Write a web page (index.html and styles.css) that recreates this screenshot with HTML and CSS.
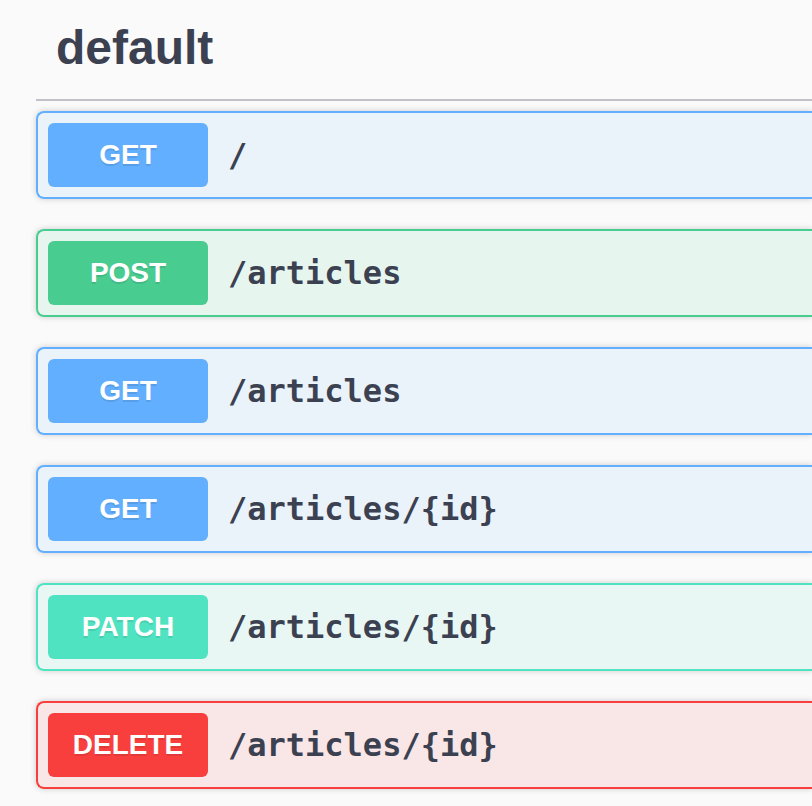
FILE: index.html
```html
<!DOCTYPE html>
<html lang="en">
<head>
<meta charset="utf-8">
<title>default</title>
<link rel="stylesheet" href="styles.css">
</head>
<body>
<div class="section">
  <h3 class="tag">default</h3>
  <div class="ops">
    <div class="op op-get"><span class="method">GET</span><span class="path">/</span></div>
    <div class="op op-post"><span class="method">POST</span><span class="path">/articles</span></div>
    <div class="op op-get"><span class="method">GET</span><span class="path">/articles</span></div>
    <div class="op op-get"><span class="method">GET</span><span class="path">/articles/{id}</span></div>
    <div class="op op-patch"><span class="method">PATCH</span><span class="path">/articles/{id}</span></div>
    <div class="op op-delete"><span class="method">DELETE</span><span class="path">/articles/{id}</span></div>
  </div>
</div>
</body>
</html>
```
FILE: styles.css
```css
html, body {
  margin: 0;
  padding: 0;
  background: #fafafa;
  overflow: hidden;
}
body {
  width: 812px;
  height: 806px;
  font-family: "Liberation Sans", Arial, sans-serif;
  color: #3b4151;
}
.section {
  margin-left: 36px;
}
.tag {
  margin: 0 0 10px 0;
  padding: 20px 40px 23px 20px;
  font-size: 48px;
  line-height: 56px;
  font-weight: 700;
  color: #3b4151;
  border-bottom: 2px solid rgba(59, 65, 81, 0.3);
}
.ops {
  display: flex;
  flex-direction: column;
  gap: 30px;
}
.op {
  display: flex;
  align-items: center;
  padding: 10px;
  border: 2px solid;
  border-right-width: 0;
  border-radius: 8px 0 0 8px;
  box-shadow: 0 0 6px rgba(0, 0, 0, 0.19);
}
.method {
  width: 160px;
  height: 64px;
  display: flex;
  align-items: center;
  justify-content: center;
  border-radius: 6px;
  color: #fff;
  font-size: 28px;
  font-weight: 700;
  text-shadow: 0 2px 0 rgba(0, 0, 0, 0.1);
}
.path {
  padding: 0 20px;
  font-family: "DejaVu Sans Mono", monospace;
  font-size: 32px;
  font-weight: 700;
  color: #3b4151;
}
.op-get { border-color: #61affe; background: rgba(97, 175, 254, 0.1); }
.op-get .method { background: #61affe; }
.op-post { border-color: #49cc90; background: rgba(73, 204, 144, 0.1); }
.op-post .method { background: #49cc90; }
.op-patch { border-color: #50e3c2; background: rgba(80, 227, 194, 0.1); }
.op-patch .method { background: #50e3c2; }
.op-delete { border-color: #f93e3e; background: rgba(249, 62, 62, 0.1); }
.op-delete .method { background: #f93e3e; }
```
